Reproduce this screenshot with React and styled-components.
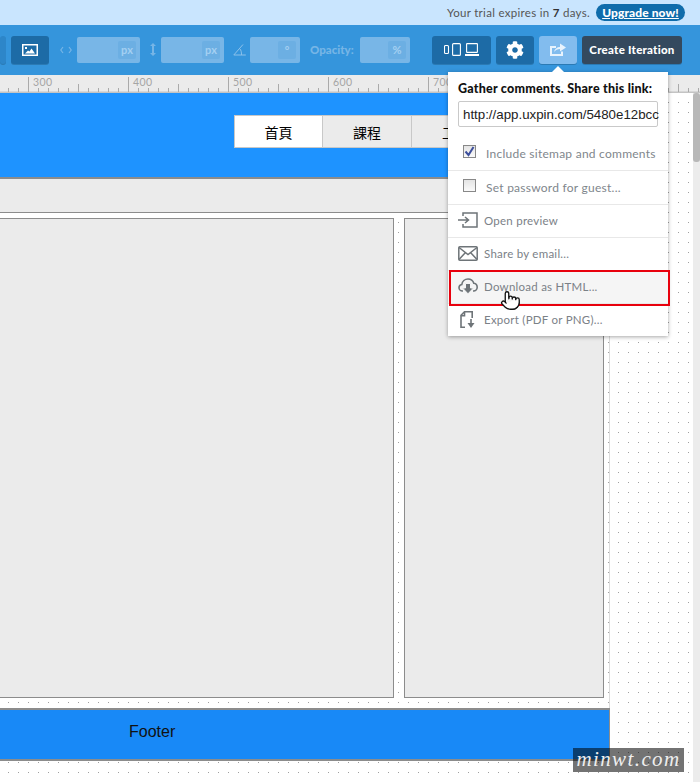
import React from 'react';
import styled, { createGlobalStyle } from 'styled-components';
import { FaCog } from 'react-icons/fa';
import { Pointer } from 'lucide-react';

const GlobalStyle = createGlobalStyle`
  html, body { margin: 0; padding: 0; background: #fff; }
  * { box-sizing: border-box; }
`;

const Root = styled.div`
  position: relative;
  width: 700px;
  height: 782px;
  overflow: hidden;
  font-family: Lato, "Liberation Sans", sans-serif;
`;

const TrialBar = styled.div`
  height: 25px;
  background: #c9e5fe;
  display: flex;
  align-items: center;
  justify-content: flex-end;
  padding: 0 15px 0 0;
  gap: 6px;
  font-size: 11.5px;
  letter-spacing: 0.3px;
  color: #555;
  b { color: #333; }
`;

const Upgrade = styled.a`
  height: 17px;
  width: 89px;
  border-radius: 9px;
  background: #0f6cab;
  color: #fff;
  font-weight: 900;
  font-size: 12px;
  letter-spacing: 0.1px;
  text-decoration: underline;
  display: flex;
  align-items: center;
  justify-content: center;
`;

const Toolbar = styled.div`
  height: 50px;
  background: #3595dc;
  display: flex;
  align-items: center;
  padding-bottom: 1px;
`;

const ToolButton = styled.div`
  height: 28px;
  width: ${p => p.$w}px;
  margin-left: ${p => p.$ml || 0}px;
  border-radius: 3px;
  background: ${p => p.$bg || '#1d6ba6'};
  box-shadow: 0 1px 0 rgba(0, 0, 0, 0.18);
  color: #fff;
  display: flex;
  align-items: center;
  justify-content: center;
  flex: none;
`;

const CreateButton = styled(ToolButton)`
  background: #34495e;
  font-size: 11.5px;
  font-weight: 900;
  letter-spacing: 0.25px;
  padding-bottom: 1px;
`;

const FadedInput = styled.div`
  height: 26px;
  width: ${p => p.$w}px;
  margin-left: ${p => p.$ml}px;
  background: #78b6e7;
  border-radius: 2px;
  display: flex;
  justify-content: flex-end;
  align-items: center;
  padding-right: 4px;
  flex: none;
`;

const Unit = styled.span`
  height: 18px;
  min-width: 18px;
  padding: 0 2px;
  background: #6cafe3;
  border-radius: 2px;
  color: #a4d0f2;
  font-size: 11px;
  font-weight: 700;
  display: flex;
  align-items: center;
  justify-content: center;
`;

const FadedIcon = styled.svg`
  margin-left: ${p => p.$ml}px;
  flex: none;
`;

const OpacityLabel = styled.span`
  margin-left: 10px;
  width: 46px;
  color: #76b5e6;
  font-size: 11.5px;
  font-weight: 900;
  flex: none;
`;

const Ruler = styled.svg`
  display: block;
  width: 700px;
  height: 18px;
  background: #ebebeb;
`;

const Workspace = styled.div`
  display: flex;
  height: 689px;
`;

const Canvas = styled.div`
  width: 693px;
  flex: none;
  background-color: #fff;
  background-image: radial-gradient(circle at 8.5px 9.5px, #a0a0a0 0.5px, transparent 0.8px);
  background-size: 10px 10px;
`;

const ScrollTrack = styled.div`
  width: 7px;
  background: #ececec;
`;

const ScrollThumb = styled.div`
  height: 69px;
  background: #b8b8b8;
  border-radius: 3px;
`;

const Page = styled.div`
  width: 610px;
  height: 615px;
  border-right: 1px solid #dcdcdc;
  display: flex;
  flex-direction: column;
`;

const Header = styled.div`
  height: 86px;
  background: #1e93ff;
  border-bottom: 2px solid #8c8c8c;
  padding: 22px 0 0 234px;
  display: flex;
  align-items: flex-start;
  overflow: hidden;
  flex: none;
`;

const NavItem = styled.div`
  width: 89px;
  height: 33px;
  flex: none;
  background: ${p => (p.$active ? '#fff' : '#ebebeb')};
  border: 1px solid #c8c8c8;
  border-left-width: ${p => (p.$active ? 1 : 0)}px;
  font-family: "Liberation Sans", "Noto Sans CJK TC", sans-serif;
  font-size: 14px;
  color: #000;
  display: flex;
  align-items: center;
  justify-content: center;
`;

const SubBand = styled.div`
  height: 34px;
  background: #ebebeb;
  border-bottom: 1px solid #8c8c8c;
  flex: none;
`;

const Columns = styled.div`
  display: grid;
  grid-template-columns: 394px 200px;
  column-gap: 10px;
  margin-top: 5px;
  height: 480px;
  flex: none;
`;

const Column = styled.div`
  background: #ebebeb;
  border: 1px solid #8c8c8c;
  border-left-width: ${p => (p.$flush ? 0 : 1)}px;
`;

const Footer = styled.div`
  margin-top: 10px;
  height: 53px;
  width: 610px;
  background: #1889f7;
  border-top: 2px solid #8c8c8c;
  border-bottom: 2px solid #8c8c8c;
  border-right: 1px solid #8c8c8c;
  font-family: "Liberation Sans", sans-serif;
  font-size: 16px;
  color: #111;
  padding: 0 0 6px 129px;
  display: flex;
  align-items: center;
  flex: none;
`;

const Popover = styled.div`
  position: absolute;
  left: 448px;
  top: 72px;
  width: 220px;
  height: 264px;
  background: #fff;
  box-shadow: 0 1px 4px rgba(0, 0, 0, 0.35);
  &::before {
    content: '';
    position: absolute;
    left: 104px;
    top: -6px;
    border-left: 6px solid transparent;
    border-right: 6px solid transparent;
    border-bottom: 6px solid #fff;
  }
`;

const PopTitle = styled.div`
  padding: 9px 0 0 10px;
  height: 29px;
  font-size: 12.5px;
  font-weight: 900;
  letter-spacing: 0.22px;
  color: #111;
  white-space: nowrap;
`;

const LinkField = styled.div`
  margin-left: 10px;
  width: 200px;
  height: 26px;
  border: 1px solid #c9c9c9;
  border-radius: 2px;
  padding: 1px 0 0 4px;
  font-family: "Liberation Sans", sans-serif;
  font-size: 13.3px;
  line-height: 24px;
  color: #222;
  white-space: nowrap;
`;

const CheckRow = styled.div`
  height: ${p => p.$h}px;
  padding: ${p => p.$pt}px 0 0 15px;
  display: flex;
  align-items: flex-start;
  gap: 10px;
  border-bottom: 1px solid #e8e8e8;
  font-size: 12px;
  letter-spacing: 0.25px;
  color: #80868c;
  white-space: nowrap;
`;

const CheckBox = styled.span`
  width: 13px;
  height: 13px;
  flex: none;
  border: 1px solid #888;
  background: linear-gradient(#e4e4e4, #fafafa);
  display: flex;
  align-items: center;
  justify-content: center;
`;

const CheckLabel = styled.span`
  margin-top: 1px;
`;

const MenuRow = styled.div`
  position: relative;
  height: ${p => (p.$last ? 32 : 33)}px;
  padding: 0 0 2px 10px;
  display: flex;
  align-items: center;
  gap: 6px;
  border-bottom: ${p => (p.$last ? 'none' : '1px solid #e8e8e8')};
  background: ${p => (p.$hover ? '#f5f5f5' : 'transparent')};
  font-size: 11.5px;
  letter-spacing: 0.25px;
  color: #7b8187;
  white-space: nowrap;
  svg { flex: none; }
`;

const RedFrame = styled.div`
  position: absolute;
  left: 1px;
  top: -1px;
  width: 221px;
  height: 36px;
  border: 2px solid #e8000d;
`;

const Hand = styled(Pointer)`
  position: absolute;
  left: 52px;
  top: 19px;
  color: #111;
  fill: #fff;
`;

const Watermark = styled.div`
  position: absolute;
  left: 573px;
  top: 748px;
  width: 111px;
  height: 24px;
  background: rgba(0, 0, 0, 0.55);
  color: #eee;
  font-family: "Liberation Serif", serif;
  font-style: italic;
  font-size: 21px;
  line-height: 23px;
  letter-spacing: 1.4px;
  text-align: center;
`;

const ticks = Array.from({ length: 71 }, (_, i) => i);

const RulerStrip = () => (
  <Ruler viewBox="0 0 700 18">
    <rect x="0" y="16.5" width="700" height="1.5" fill="#c4c4c4" />
    {ticks.map(i => {
      const x = i * 10 + 8.5;
      const long = i % 10 === 2;
      const mid = i % 5 === 2;
      return <line key={i} x1={x} x2={x} y1={long ? 2 : mid ? 9 : 13} y2={17} stroke="#aaa" strokeWidth="1" />;
    })}
    {[300, 400, 500, 600, 700].map((n, i) => (
      <text key={n} x={33 + i * 100} y="11" fontSize="10.5" fontFamily="Lato, sans-serif" letterSpacing="0.4" fill="#a5a5a5">{n}</text>
    ))}
  </Ruler>
);

const ImageIcon = () => (
  <svg width="16" height="12" viewBox="0 0 16 12">
    <path fill="#fff" fillRule="evenodd" d="M0 0h16v12H0zM1.500 1.500v9h13v-9z" />
    <rect x="3" y="3" width="2" height="2" fill="#fff" />
    <path fill="#fff" d="M3 9.500l3-3 1.500 1 2-3 3.500 5z" />
  </svg>
);

const DevicesIcon = () => (
  <svg width="35" height="13" viewBox="0 0 35 13" fill="none" stroke="#fff" strokeWidth="1.100">
    <rect x="0.500" y="2.500" width="4" height="8" rx="1" />
    <rect x="8.600" y="0.600" width="7.800" height="11.800" rx="1" />
    <rect x="22.600" y="0.600" width="10.800" height="8.800" rx="0.500" />
    <rect x="21" y="11" width="14" height="2" fill="#fff" stroke="none" />
  </svg>
);

const ShareIcon = () => (
  <svg width="16" height="13" viewBox="0 0 16 13">
    <path fill="none" stroke="#e8f3fd" strokeWidth="2" d="M6 4H1v8h11V8.500" />
    <path fill="#e8f3fd" d="M4 9c.5-3 3-5 6-5V0.500L16 4.500l-6 4V6C7.500 6 5.500 7 4 9z" />
  </svg>
);

const ArrowsIcon = () => (
  <FadedIcon $ml={11} width="12" height="8" viewBox="0 0 12 8" fill="none" stroke="#76b5e6" strokeWidth="1.200">
    <path d="M3 1L0.800 4 3 7M9 1l2.200 3L9 7" />
  </FadedIcon>
);

const HeightIcon = () => (
  <FadedIcon $ml={10} width="6" height="13" viewBox="0 0 6 13" fill="#76b5e6">
    <path d="M3 0l3 3H4v7h2l-3 3-3-3h2V3H0z" />
  </FadedIcon>
);

const AngleIcon = () => (
  <FadedIcon $ml={9} width="13" height="12" viewBox="0 0 13 12" fill="none" stroke="#8cc1ea" strokeWidth="1">
    <path d="M10 0.500L0.800 11h12M7 5c1 1 1.500 3 1.500 6" />
  </FadedIcon>
);

const PreviewIcon = () => (
  <svg width="20" height="16" viewBox="0 0 20 16" fill="none" stroke="#6e7478" strokeWidth="1.500">
    <path d="M5 4V1h14v14H5v-3" />
    <path d="M0 8h10M7 5l3.500 3L7 11" />
  </svg>
);

const MailIcon = () => (
  <svg width="20" height="15" viewBox="0 0 20 15" fill="none" stroke="#6e7478" strokeWidth="1.500">
    <rect x="0.800" y="0.800" width="18.400" height="13.400" rx="1" />
    <path d="M1 1.500l9 7 9-7M1 13.500l6.500-7M19 13.500l-6.500-7" />
  </svg>
);

const CloudIcon = () => (
  <svg width="20" height="16" viewBox="0 0 20 16">
    <path fill="none" stroke="#6e7478" strokeWidth="1.600" d="M5 13H4.500C2.500 13 1 11.500 1 9.700 1 8 2.300 6.800 3.800 6.500 4.200 3.300 6.800 1 10 1c2.800 0 5 1.700 5.800 4.200 1.800.3 3.400 2 3.400 4 0 2.200-1.700 3.800-3.700 3.800H15" />
    <path fill="#6e7478" stroke="#f5f5f5" strokeWidth="1" d="M7.500 5.500h5V10h3L10 15.800 4.500 10h3z" />
  </svg>
);

const ExportIcon = () => (
  <svg width="20" height="17" viewBox="0 0 20 17" fill="none" stroke="#6e7478" strokeWidth="1.600">
    <path d="M9 0.800H6.500L3 4.300V16.200h4" />
    <path d="M6.500 1v3.800H3" />
    <path d="M9 0.800h5.200V7" />
    <path d="M13 8v7.500" />
    <path fill="#6e7478" stroke="none" d="M9.500 12h7L13 17z" />
  </svg>
);

const TickMark = () => (
  <svg width="11" height="11" viewBox="0 0 11 11" fill="none" stroke="#3d4f9c" strokeWidth="2">
    <path d="M1.500 5.500l3 3.500L9.500 1" />
  </svg>
);

const App = () => (
  <Root>
    <GlobalStyle />
    <TrialBar>
      <span>Your trial expires in <b>7</b> days.</span>
      <Upgrade>Upgrade now!</Upgrade>
    </TrialBar>
    <Toolbar>
      <ToolButton $w={6} $bg="#2d86c9" />
      <ToolButton $w={38} $ml={5}><ImageIcon /></ToolButton>
      <ArrowsIcon />
      <FadedInput $w={63} $ml={5}><Unit>px</Unit></FadedInput>
      <HeightIcon />
      <FadedInput $w={63} $ml={5}><Unit>px</Unit></FadedInput>
      <AngleIcon />
      <FadedInput $w={50} $ml={4}><Unit>°</Unit></FadedInput>
      <OpacityLabel>Opacity:</OpacityLabel>
      <FadedInput $w={50} $ml={4}><Unit>%</Unit></FadedInput>
      <ToolButton $w={59} $ml={22}><DevicesIcon /></ToolButton>
      <ToolButton $w={38} $ml={5}><FaCog size={18} /></ToolButton>
      <ToolButton $w={38} $ml={5} $bg="#82bcee"><ShareIcon /></ToolButton>
      <CreateButton $w={100} $ml={5}>Create Iteration</CreateButton>
    </Toolbar>
    <RulerStrip />
    <Workspace>
      <Canvas>
        <Page>
          <Header>
            <NavItem $active>首頁</NavItem>
            <NavItem>課程</NavItem>
            <NavItem>工作</NavItem>
          </Header>
          <SubBand />
          <Columns>
            <Column $flush />
            <Column />
          </Columns>
          <Footer>Footer</Footer>
        </Page>
      </Canvas>
      <ScrollTrack><ScrollThumb /></ScrollTrack>
    </Workspace>
    <Popover>
      <PopTitle>Gather comments. Share this link:</PopTitle>
      <LinkField>http://app.uxpin.com/5480e12bcc</LinkField>
      <CheckRow $h={44} $pt={18}>
        <CheckBox><TickMark /></CheckBox>
        <CheckLabel>Include sitemap and comments</CheckLabel>
      </CheckRow>
      <CheckRow $h={34} $pt={8}>
        <CheckBox />
        <CheckLabel>Set password for guest...</CheckLabel>
      </CheckRow>
      <MenuRow><PreviewIcon />Open preview</MenuRow>
      <MenuRow><MailIcon />Share by email...</MenuRow>
      <MenuRow $hover>
        <CloudIcon />Download as HTML...
        <RedFrame />
        <Hand size={21} strokeWidth={1.500} />
      </MenuRow>
      <MenuRow $last><ExportIcon />Export (PDF or PNG)...</MenuRow>
    </Popover>
    <Watermark>minwt.com</Watermark>
  </Root>
);

export default App;
